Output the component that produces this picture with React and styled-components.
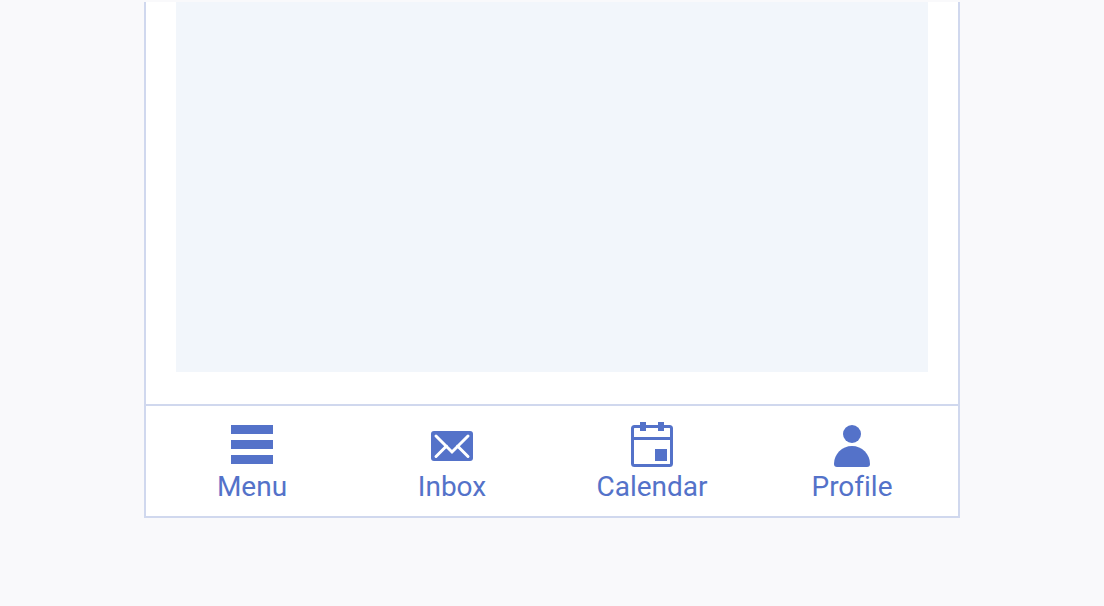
import React from "react";
import styled, { createGlobalStyle } from "styled-components";

const GlobalStyle = createGlobalStyle`
  body {
    margin: 0;
    background: #f9f9fb;
    font-family: Roboto, "Liberation Sans", sans-serif;
  }
`;

const Page = styled.div`
  padding: 2px 144px 88px;
`;

const Screen = styled.div`
  border: 2px solid #d0d8ee;
  border-top: none;
  background: #fff;
`;

const Content = styled.main`
  padding: 0 30px 32px;
`;

const Placeholder = styled.div`
  height: 370px;
  background: #f2f6fb;
`;

const TabBar = styled.nav`
  display: flex;
  border-top: 2px solid #d0d8ee;
  padding: 15px 6px 11px;
`;

const Tab = styled.a`
  flex: 1;
  display: flex;
  flex-direction: column;
  align-items: center;
  color: #5472c9;
  text-decoration: none;
`;

const Icon = styled.svg`
  display: block;
  width: 48px;
  height: 48px;
  fill: currentColor;
`;

const Label = styled.span`
  font-size: 28px;
  line-height: 36px;
  font-variant-ligatures: none;
`;

const MenuIcon = () => (
  <Icon viewBox="0 0 48 48" aria-hidden="true">
    <path d="M3 4h42v9H3zM3 19h42v9H3zM3 34h42v9H3z" />
  </Icon>
);

const InboxIcon = () => (
  <Icon viewBox="0 0 48 48" aria-hidden="true">
    <rect x="3" y="10" width="42" height="30" rx="3" />
    <path
      d="M8 15L24 31L40 15M8 35.5L18.5 25M40 35.5L29.5 25"
      fill="none"
      stroke="#fff"
      strokeWidth="3"
      strokeLinecap="round"
    />
  </Icon>
);

const CalendarIcon = () => (
  <Icon viewBox="0 0 48 48" aria-hidden="true">
    <rect
      x="4.5"
      y="5.5"
      width="39"
      height="39"
      rx="2"
      fill="none"
      stroke="currentColor"
      strokeWidth="3"
    />
    <path d="M4 16h40v3H4zM12 1h6v9h-6zM30 1h6v9h-6zM27 28h12v12H27z" />
  </Icon>
);

const ProfileIcon = () => (
  <Icon viewBox="0 0 48 48" aria-hidden="true">
    <circle cx="24" cy="13" r="9" />
    <path d="M6 43C6 33 14 25 24 25s18 8 18 18c0 2-1 3-3 3H9c-2 0-3-1-3-3z" />
  </Icon>
);

const tabs = [
  { label: "Menu", icon: MenuIcon },
  { label: "Inbox", icon: InboxIcon },
  { label: "Calendar", icon: CalendarIcon },
  { label: "Profile", icon: ProfileIcon },
];

const App = () => (
  <>
    <GlobalStyle />
    <Page>
      <Screen>
        <Content>
          <Placeholder />
        </Content>
        <TabBar>
          {tabs.map(({ label, icon: TabIcon }) => (
            <Tab key={label} href={`#${label.toLowerCase()}`}>
              <TabIcon />
              <Label>{label}</Label>
            </Tab>
          ))}
        </TabBar>
      </Screen>
    </Page>
  </>
);

export default App;
